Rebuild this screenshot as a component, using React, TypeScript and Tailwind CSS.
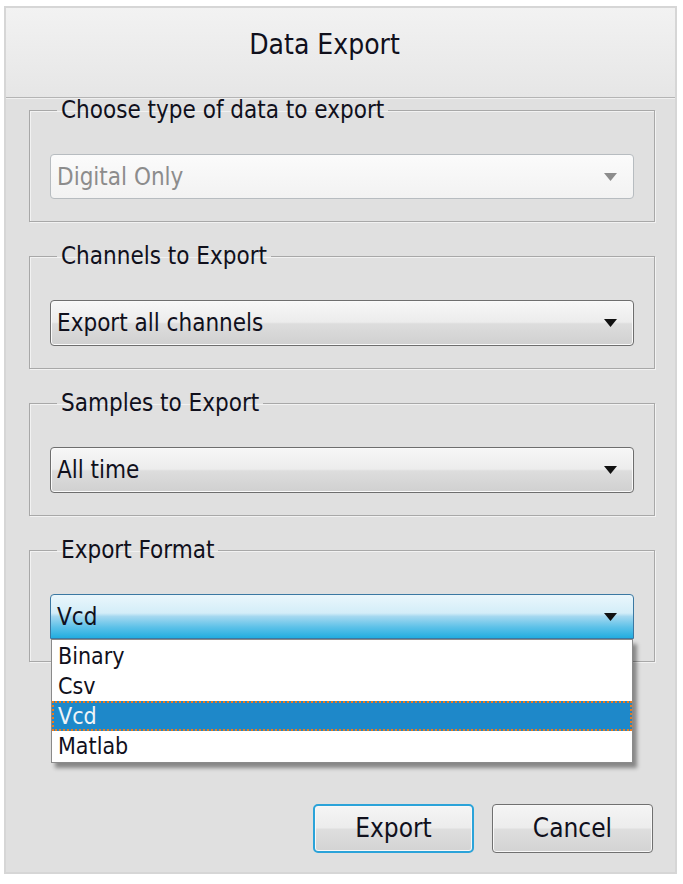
import { useState } from "react";

const font = "font-['DejaVu_Sans_Condensed','DejaVu_Sans',sans-serif]";

function Arrow({ color = "#111" }: { color?: string }) {
  return (
    <svg width="13" height="8" viewBox="0 0 13 8" className="shrink-0">
      <path d="M0 0 H13 L6.5 8 Z" fill={color} />
    </svg>
  );
}

function Group({ title, children }: { title: string; children: React.ReactNode }) {
  return (
    <fieldset className="border border-[#a8a8a8] px-[20px] pb-[22px] shadow-[inset_1px_1px_0_#f2f2f2,1px_1px_0_#f2f2f2]">
      <legend className="ml-[7px] px-[4px] text-[24px] leading-[24px] text-[#10101c]">{title}</legend>
      <div className="mt-[32px]">{children}</div>
    </fieldset>
  );
}

export default function App() {
  const [format, setFormat] = useState("Vcd");
  const formats = ["Binary", "Csv", "Vcd", "Matlab"];

  return (
    <div className={`min-h-[884px] bg-white pt-[6px] pl-[4px] ${font}`}>
      <div className="flex h-[868px] w-[673px] flex-col border-2 border-[#d6d6d6] bg-[#e0e0e0]">
        {/* title bar */}
        <div className="flex h-[90px] items-start justify-center border-b border-[#b4b4b4] bg-[linear-gradient(to_bottom,#f2f2f2,#e6e6e6)] pt-[20px] pr-[32px] shadow-[0_1px_0_#f0f0f0]">
          <span className="text-[28px] leading-[34px] text-[#10101c]">Data Export</span>
        </div>

        <div className="flex flex-1 flex-col pl-[23px] pr-[20px]">
          <Group title="Choose type of data to export">
            <div className="flex h-[45px] items-center justify-between rounded-[4px] border border-[#b7bcc0] bg-[linear-gradient(to_bottom,#fbfbfb,#f2f2f2)] pl-[6px] pr-[16px]">
              <span className="text-[24px] text-[#8c8c8c]">Digital Only</span>
              <Arrow color="#8c8c8c" />
            </div>
          </Group>

          <div className="mt-[22px]">
            <Group title="Channels to Export">
              <div className="flex h-[46px] items-center justify-between rounded-[4px] border border-[#6e6e6e] bg-[linear-gradient(to_bottom,#f7f7f7_0%,#ececec_48%,#dddddd_52%,#d0d0d0_100%)] pl-[6px] pr-[16px] shadow-[inset_0_0_0_1px_#fafafa]">
                <span className="text-[24px] text-[#10101c]">Export all channels</span>
                <Arrow />
              </div>
            </Group>
          </div>

          <div className="mt-[22px]">
            <Group title="Samples to Export">
              <div className="flex h-[46px] items-center justify-between rounded-[4px] border border-[#6e6e6e] bg-[linear-gradient(to_bottom,#f7f7f7_0%,#ececec_48%,#dddddd_52%,#d0d0d0_100%)] pl-[6px] pr-[16px] shadow-[inset_0_0_0_1px_#fafafa]">
                <span className="text-[24px] text-[#10101c]">All time</span>
                <Arrow />
              </div>
            </Group>
          </div>

          <div className="mt-[22px]">
            <Group title="Export Format">
              <div className="relative">
                <div className="flex h-[45px] items-center justify-between rounded-t-[4px] border border-[#3b78a2] bg-[linear-gradient(to_bottom,#eaf6fc_0%,#d3edf8_42%,#a4d8f0_50%,#5cc1e8_75%,#22ade0_100%)] pl-[6px] pr-[16px]">
                  <span className="text-[24px] text-[#10101c]">{format}</span>
                  <Arrow />
                </div>
                {/* open list */}
                <div className="absolute left-[1px] right-[1px] top-full z-10 border border-[#8a8a8a] bg-white py-[1px] shadow-[4px_5px_4px_rgba(0,0,0,0.4)]">
                  {formats.map((f) => (
                    <div
                      key={f}
                      onClick={() => setFormat(f)}
                      className={
                        f === format
                          ? "flex h-[30px] items-center border-2 border-dotted border-[#f07a1a] bg-[#1e88c9] pl-[4px] text-[23px] text-[#eef4f8]"
                          : "flex h-[30px] items-center border border-transparent pl-[5px] text-[23px] text-[#10101c]"
                      }
                    >
                      {f}
                    </div>
                  ))}
                </div>
              </div>
            </Group>
          </div>

          <div className="mt-auto mb-[19px] mr-[2px] flex justify-end gap-[18px]">
            <button className="h-[49px] w-[161px] rounded-[5px] border-2 border-[#2ba3d9] bg-[linear-gradient(to_bottom,#f5f5f5_0%,#ececec_48%,#dedede_52%,#d3d3d3_100%)] text-[26px] text-[#10101c] shadow-[inset_0_0_0_1px_#f8f8f8]">
              Export
            </button>
            <button className="h-[49px] w-[161px] rounded-[4px] border border-[#707070] bg-[linear-gradient(to_bottom,#f5f5f5_0%,#ececec_48%,#dedede_52%,#d3d3d3_100%)] text-[26px] text-[#10101c] shadow-[inset_0_0_0_1px_#f8f8f8]">
              Cancel
            </button>
          </div>
        </div>
      </div>
    </div>
  );
}
